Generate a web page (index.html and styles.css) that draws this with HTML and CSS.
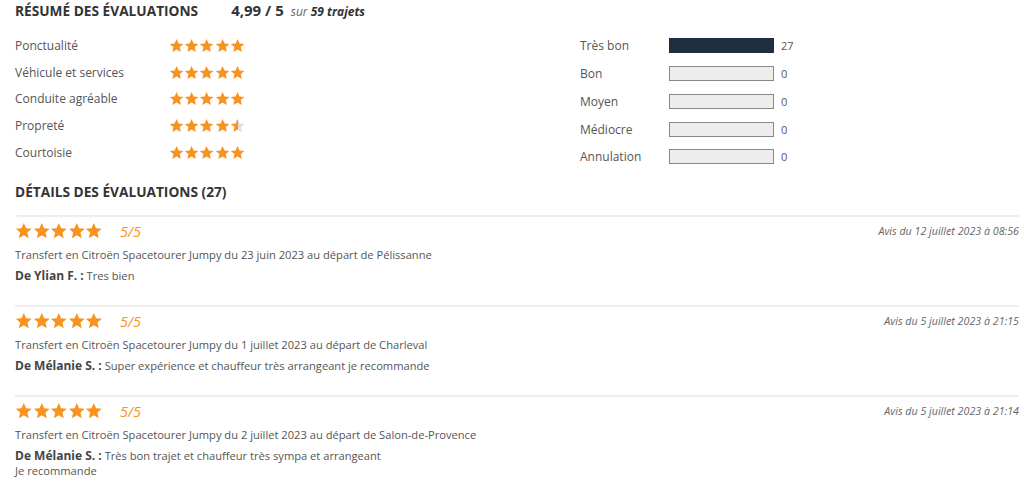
FILE: index.html
```html
<!DOCTYPE html>
<html lang="fr">
<head>
<meta charset="utf-8">
<link rel="stylesheet" href="styles.css">
</head>
<body>
<svg width="0" height="0" class="defs">
  <defs>
    <symbol id="star" viewBox="0 0 24 24"><path d="M12 1.5l3.1 7.1 7.7.7-5.8 5.1 1.7 7.6L12 18l-6.7 4 1.7-7.6-5.8-5.1 7.7-.7z"/></symbol>
    <linearGradient id="half"><stop offset="55%" stop-color="#f7931e"/><stop offset="55%" stop-color="#ddd"/></linearGradient>
  </defs>
</svg>
<div class="page">
  <div class="summary-head">
    <h2 class="title">RÉSUMÉ DES ÉVALUATIONS</h2>
    <span class="score">4,99 / 5</span>
    <span class="over"><span class="sur">sur</span> <b>59 trajets</b></span>
  </div>
  <div class="summary">
    <div class="criteria">
      <div class="crit"><span class="crit-label">Ponctualité</span><span class="stars sm"><svg><use href="#star"/></svg><svg><use href="#star"/></svg><svg><use href="#star"/></svg><svg><use href="#star"/></svg><svg><use href="#star"/></svg></span></div>
      <div class="crit"><span class="crit-label">Véhicule et services</span><span class="stars sm"><svg><use href="#star"/></svg><svg><use href="#star"/></svg><svg><use href="#star"/></svg><svg><use href="#star"/></svg><svg><use href="#star"/></svg></span></div>
      <div class="crit"><span class="crit-label">Conduite agréable</span><span class="stars sm"><svg><use href="#star"/></svg><svg><use href="#star"/></svg><svg><use href="#star"/></svg><svg><use href="#star"/></svg><svg><use href="#star"/></svg></span></div>
      <div class="crit"><span class="crit-label">Propreté</span><span class="stars sm"><svg><use href="#star"/></svg><svg><use href="#star"/></svg><svg><use href="#star"/></svg><svg><use href="#star"/></svg><svg class="half"><use href="#star"/></svg></span></div>
      <div class="crit"><span class="crit-label">Courtoisie</span><span class="stars sm"><svg><use href="#star"/></svg><svg><use href="#star"/></svg><svg><use href="#star"/></svg><svg><use href="#star"/></svg><svg><use href="#star"/></svg></span></div>
    </div>
    <div class="dist">
      <div class="dist-row"><span class="dist-label">Très bon</span><span class="bar full"></span><span class="count">27</span></div>
      <div class="dist-row"><span class="dist-label">Bon</span><span class="bar"></span><span class="count">0</span></div>
      <div class="dist-row"><span class="dist-label">Moyen</span><span class="bar"></span><span class="count">0</span></div>
      <div class="dist-row"><span class="dist-label">Médiocre</span><span class="bar"></span><span class="count">0</span></div>
      <div class="dist-row"><span class="dist-label">Annulation</span><span class="bar"></span><span class="count">0</span></div>
    </div>
  </div>
  <h2 class="title details-title">DÉTAILS DES ÉVALUATIONS (27)</h2>
  <div class="reviews">
    <div class="review">
      <div class="review-top">
        <span class="stars lg"><svg><use href="#star"/></svg><svg><use href="#star"/></svg><svg><use href="#star"/></svg><svg><use href="#star"/></svg><svg><use href="#star"/></svg></span>
        <span class="note">5/5</span>
        <span class="date">Avis du 12 juillet 2023 à 08:56</span>
      </div>
      <p class="trip">Transfert en Citroën Spacetourer Jumpy du 23 juin 2023 au départ de Pélissanne</p>
      <p class="comment"><b>De Ylian F. :</b> Tres bien</p>
    </div>
    <div class="review">
      <div class="review-top">
        <span class="stars lg"><svg><use href="#star"/></svg><svg><use href="#star"/></svg><svg><use href="#star"/></svg><svg><use href="#star"/></svg><svg><use href="#star"/></svg></span>
        <span class="note">5/5</span>
        <span class="date">Avis du 5 juillet 2023 à 21:15</span>
      </div>
      <p class="trip">Transfert en Citroën Spacetourer Jumpy du 1 juillet 2023 au départ de Charleval</p>
      <p class="comment"><b>De Mélanie S. :</b> Super expérience et chauffeur très arrangeant je recommande</p>
    </div>
    <div class="review">
      <div class="review-top">
        <span class="stars lg"><svg><use href="#star"/></svg><svg><use href="#star"/></svg><svg><use href="#star"/></svg><svg><use href="#star"/></svg><svg><use href="#star"/></svg></span>
        <span class="note">5/5</span>
        <span class="date">Avis du 5 juillet 2023 à 21:14</span>
      </div>
      <p class="trip">Transfert en Citroën Spacetourer Jumpy du 2 juillet 2023 au départ de Salon-de-Provence</p>
      <p class="comment"><b>De Mélanie S. :</b> Très bon trajet et chauffeur très sympa et arrangeant<br>Je recommande</p>
    </div>
  </div>
</div>
</body>
</html>
```
FILE: styles.css
```css
* { box-sizing: border-box; }
html, body { margin: 0; padding: 0; background: #fff; }
body { font-family: "Open Sans", "Liberation Sans", sans-serif; color: #555; }
.defs { position: absolute; width: 0; height: 0; }
.page { padding: 0 5px 0 15px; }

.title { margin: 0; font-size: 13.7px; font-weight: 700; color: #333; letter-spacing: 0; line-height: 20px; }
.summary-head { display: flex; align-items: baseline; padding-top: 0; height: 23px; }
.score { margin-left: 33px; font-size: 15px; font-weight: 700; color: #333; }
.over { margin-left: 7px; font-size: 12px; font-style: italic; color: #333; }
.over .sur { color: #666; }
.over b { font-weight: 700; }

.summary { display: flex; padding-top: 9px; }
.criteria { width: 565px; display: flex; flex-direction: column; }
.crit { display: flex; align-items: center; height: 26.75px; font-size: 12px; }
.crit-label { width: 154px; }

.stars { display: inline-flex; }
.stars svg { fill: #f7931e; }
.stars.sm svg { width: 15.2px; height: 15.2px; }
.stars.lg svg { width: 17.6px; height: 17.6px; }
.stars svg.half { fill: url(#half); }

.dist { display: flex; flex-direction: column; }
.dist-row { display: flex; align-items: center; height: 27.75px; font-size: 12px; }
.dist-label { width: 89px; }
.bar { width: 105px; height: 15px; background: #ededed; border: 1px solid #888; }
.bar.full { background: #1f2f40; border-color: #1f2f40; }
.count { margin-left: 7px; font-size: 11px; }

.details-title { margin-top: 11px; }

.reviews { margin-top: 13px; }
.review { border-top: 2px solid #eee; height: 90px; padding-top: 5px; }
.review-top { display: flex; align-items: center; height: 19px; }
.note { margin-left: 17px; font-size: 14.5px; font-style: italic; color: #f7931e; }
.date { margin-left: auto; font-size: 10.7px; font-style: italic; color: #666; }
.trip { margin: 6px 0 0; font-size: 11.15px; line-height: 16px; color: #555; }
.comment { margin: 5px 0 0; font-size: 11.15px; line-height: 15px; color: #555; }
.comment b { font-size: 12px; color: #444; }
```
